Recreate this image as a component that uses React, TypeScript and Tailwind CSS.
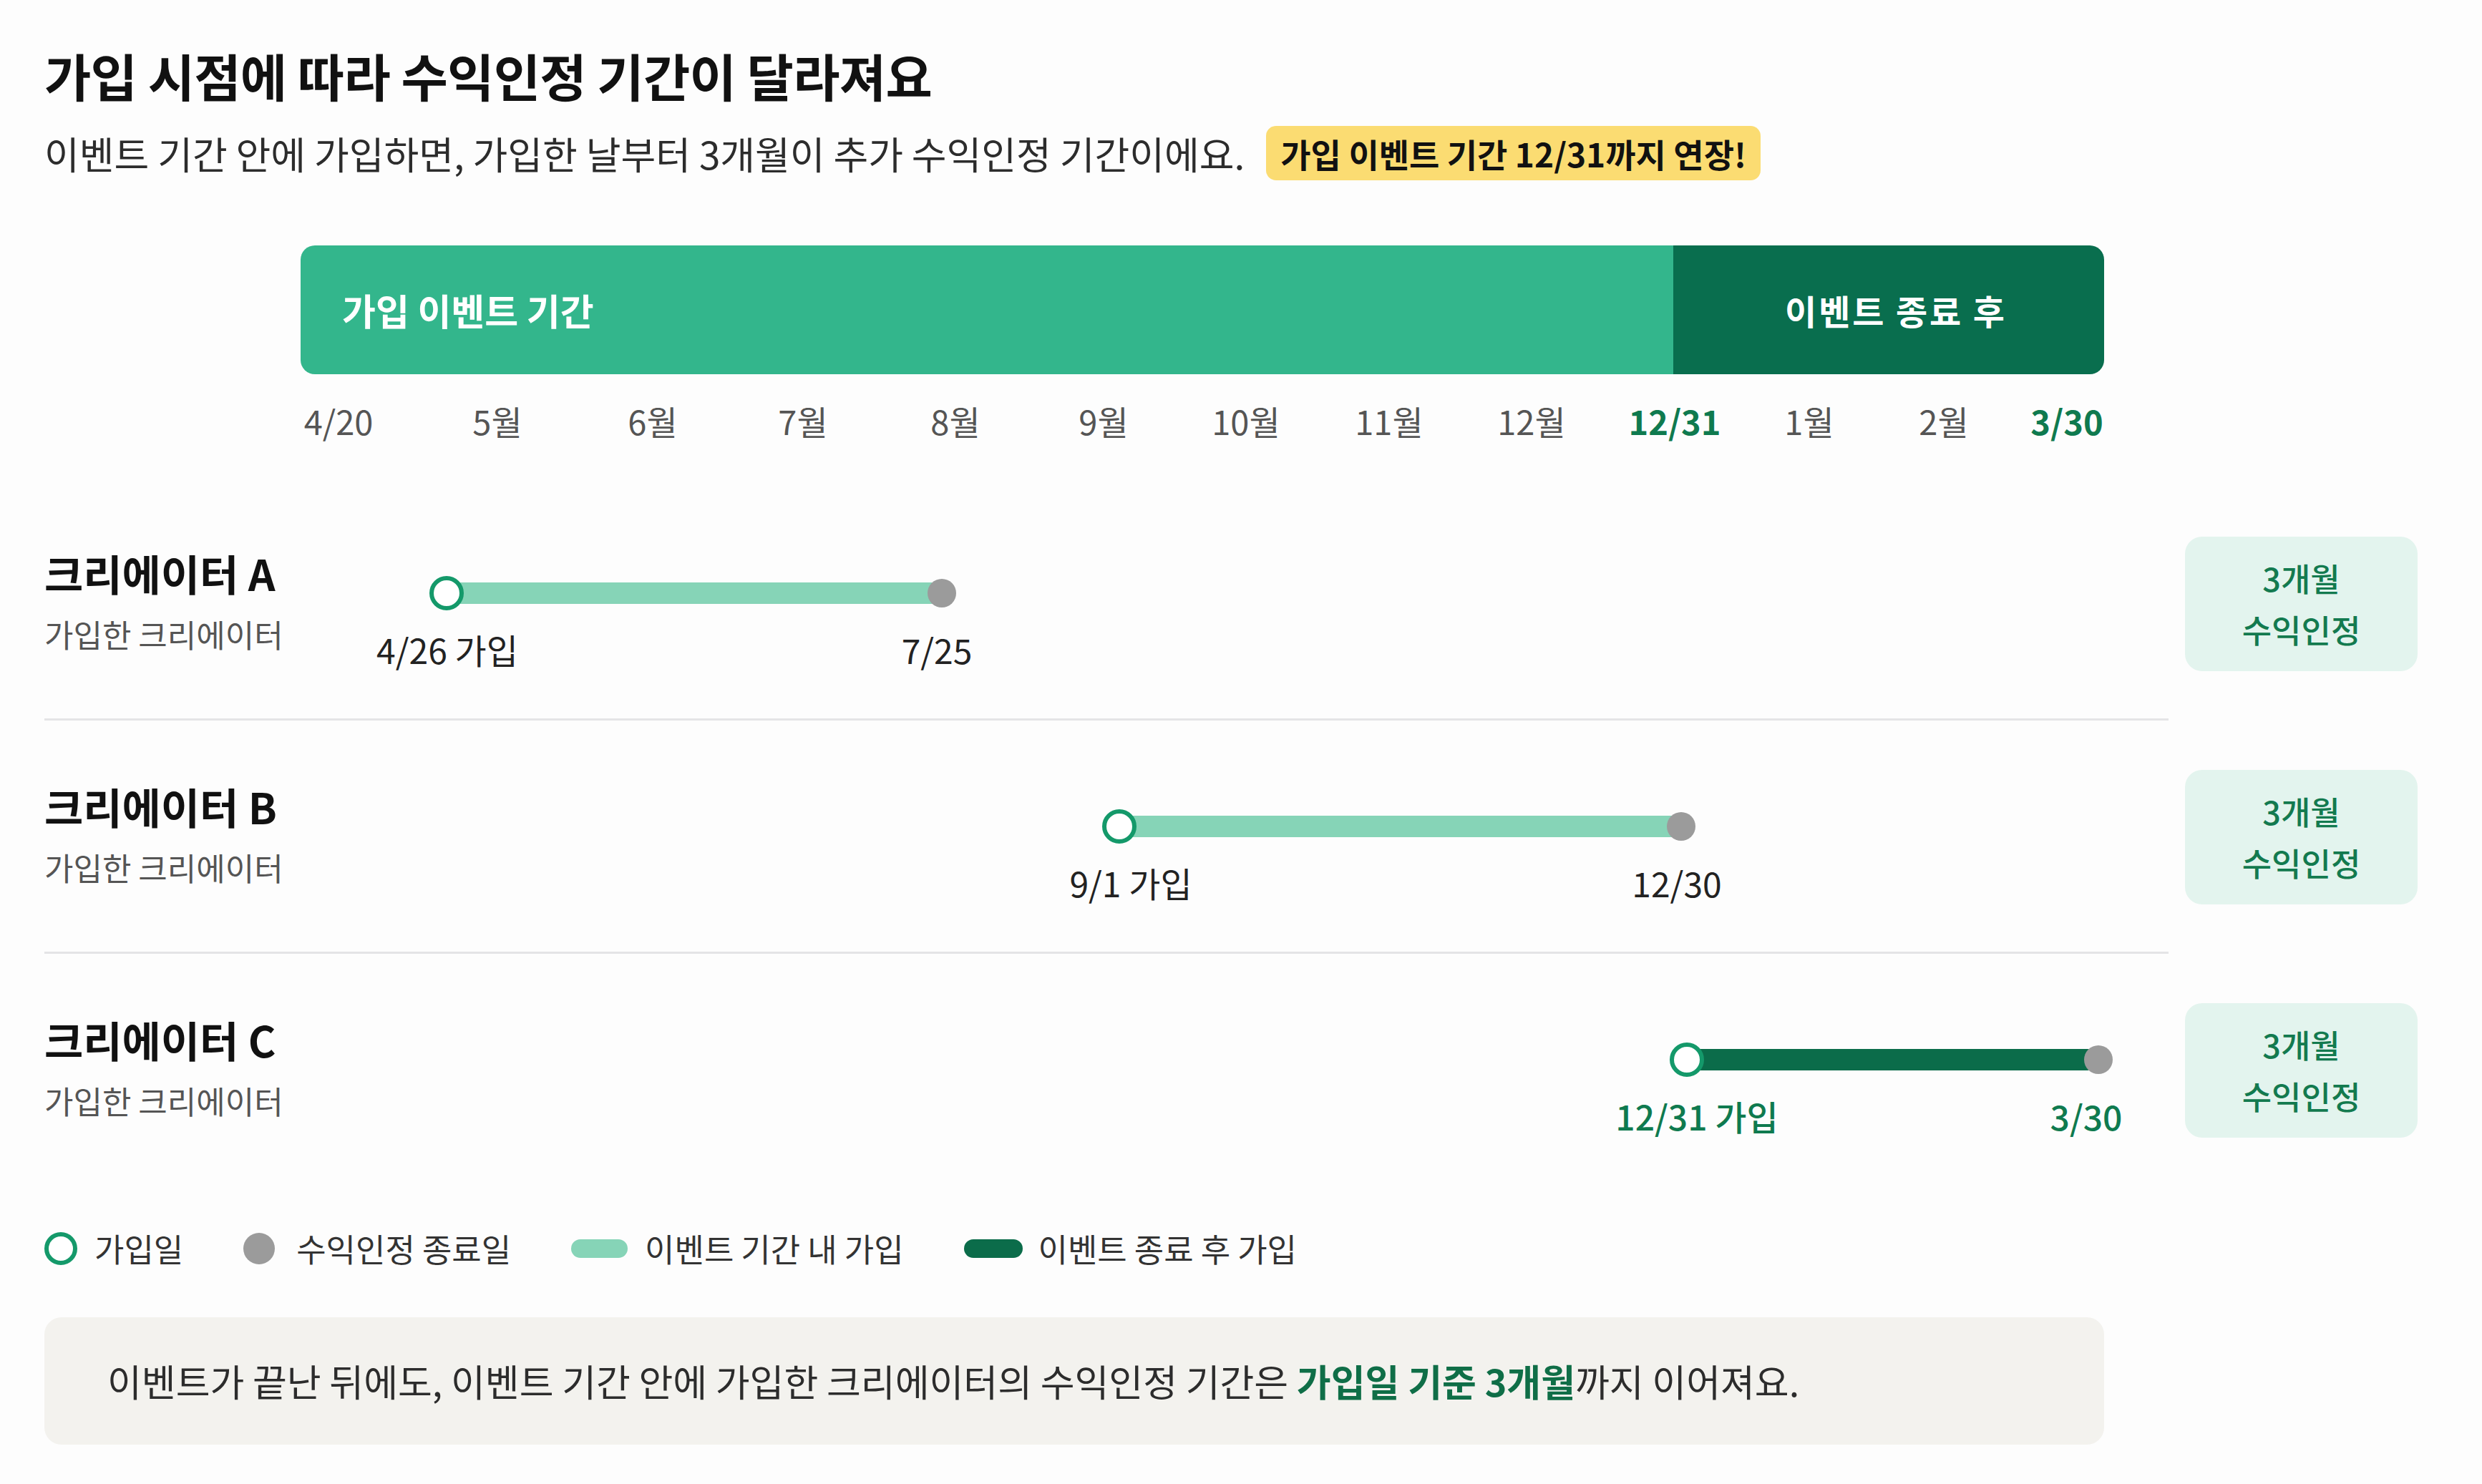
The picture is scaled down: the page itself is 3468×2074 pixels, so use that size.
import React from "react";

type Creator = {
  id: string;
  start: number;
  end: number;
  from: string;
  to: string;
  fromX: number;
  toX: number;
  after?: boolean;
};

// label centres on the axis, measured from the left edge of the period bar
const months = [
  { label: "4/20", x: 53 },
  { label: "5월", x: 275 },
  { label: "6월", x: 492 },
  { label: "7월", x: 702 },
  { label: "8월", x: 915 },
  { label: "9월", x: 1122 },
  { label: "10월", x: 1321 },
  { label: "11월", x: 1521 },
  { label: "12월", x: 1720 },
  { label: "12/31", x: 1920, strong: true },
  { label: "1월", x: 2108 },
  { label: "2월", x: 2296 },
  { label: "3/30", x: 2468, strong: true },
];

const creators: Creator[] = [
  { id: "A", start: 204, end: 896, from: "4/26 가입", to: "7/25", fromX: 205, toX: 889 },
  { id: "B", start: 1144, end: 1929, from: "9/1 가입", to: "12/30", fromX: 1160, toX: 1923 },
  { id: "C", start: 1937, end: 2512, from: "12/31 가입", to: "3/30", fromX: 1951, toX: 2495, after: true },
];

const CreatorRow: React.FC<{ row: Creator; last: boolean }> = ({ row, last }) => {
  const labelColor = row.after ? "text-[#0f7a4f] font-medium" : "text-[#222222]";

  return (
    <div className="flex items-center">
      <div
        className={
          last
            ? "flex h-[326px] w-[2968px] shrink-0"
            : "flex h-[326px] w-[2968px] shrink-0 border-b-[3px] border-[#e4e4e6]"
        }
      >
        <div className="w-[358px] shrink-0 pt-[88px]">
          <div className="text-[59px] font-bold leading-[64px] text-[#111111]">크리에이터 {row.id}</div>
          <div className="mt-[26px] text-[44px] leading-[54px] text-[#555555]">가입한 크리에이터</div>
        </div>
        <div className="relative flex-1">
          <div
            className={
              row.after
                ? "absolute top-[133px] h-[30px] rounded-full bg-[#0b6c4a]"
                : "absolute top-[133px] h-[30px] rounded-full bg-[#86d4b7]"
            }
            style={{ left: row.start, width: row.end - row.start }}
          />
          <div
            className="absolute top-[124px] h-[48px] w-[48px] -translate-x-1/2 rounded-full border-[6px] border-[#14996a] bg-white"
            style={{ left: row.start }}
          />
          <div
            className="absolute top-[128px] h-[40px] w-[40px] -translate-x-1/2 rounded-full bg-[#9b9b9b]"
            style={{ left: row.end }}
          />
          <div
            className={`absolute top-[198px] -translate-x-1/2 whitespace-nowrap text-[48px] leading-[56px] ${labelColor}`}
            style={{ left: row.fromX }}
          >
            {row.from}
          </div>
          <div
            className={`absolute top-[198px] -translate-x-1/2 whitespace-nowrap text-[48px] leading-[56px] ${labelColor}`}
            style={{ left: row.toX }}
          >
            {row.to}
          </div>
        </div>
      </div>
      <div className="ml-[23px] flex h-[188px] w-[325px] shrink-0 flex-col items-center justify-center rounded-[24px] bg-[#e3f4ee] text-[45px] font-medium leading-[72px] text-[#137a4f]">
        <span>3개월</span>
        <span>수익인정</span>
      </div>
    </div>
  );
};

const App: React.FC = () => {
  return (
    <div className="min-h-screen w-full bg-[#fdfdfd] pl-[62px] pt-[64px] font-['Noto_Sans_CJK_KR','Noto_Sans',sans-serif] text-[#222222]">
      <h1 className="text-[71px] font-bold leading-[80px] tracking-[-0.01em] text-[#111111]">
        가입 시점에 따라 수익인정 기간이 달라져요
      </h1>

      <div className="mt-[32px] flex h-[76px] items-center">
        <p className="text-[53px] leading-[67px] text-[#2c2c2c]">
          이벤트 기간 안에 가입하면, 가입한 날부터 3개월이 추가 수익인정 기간이에요.
        </p>
        <span className="ml-[30px] flex h-[76px] items-center rounded-[14px] bg-[#fbdc72] px-[20px] text-[46px] font-bold text-[#111111]">
          가입 이벤트 기간 12/31까지 연장!
        </span>
      </div>

      {/* overall period bar */}
      <div className="ml-[358px] mt-[91px] flex h-[180px] w-[2520px] overflow-hidden rounded-[20px]">
        <div className="flex w-[1918px] items-center bg-[#33b68c] pl-[58px] text-[51px] font-semibold text-white">
          가입 이벤트 기간
        </div>
        <div className="flex flex-1 items-center justify-center bg-[#096e4e] pl-[20px] text-[48px] font-semibold tracking-[0.06em] text-white">
          이벤트 종료 후
        </div>
      </div>

      <div className="relative ml-[358px] mt-[35px] h-[60px] w-[2520px]">
        {months.map((m) => (
          <span
            key={m.label}
            className={
              m.strong
                ? "absolute top-0 -translate-x-1/2 whitespace-nowrap text-[47px] font-semibold leading-[60px] text-[#0f7a4f]"
                : "absolute top-0 -translate-x-1/2 whitespace-nowrap text-[47px] leading-[60px] text-[#555555]"
            }
            style={{ left: m.x }}
          >
            {m.label}
          </span>
        ))}
      </div>

      <div className="mt-[63px]">
        {creators.map((c, i) => (
          <CreatorRow key={c.id} row={c} last={i === creators.length - 1} />
        ))}
      </div>

      {/* legend */}
      <div className="mt-[56px] flex h-[59px] items-center gap-[84px] text-[45px] text-[#333333]">
        <div className="flex items-center gap-[24px]">
          <span className="h-[46px] w-[46px] rounded-full border-[6px] border-[#14996a] bg-white" />
          <span>가입일</span>
        </div>
        <div className="flex items-center gap-[30px]">
          <span className="h-[44px] w-[44px] rounded-full bg-[#9b9b9b]" />
          <span>수익인정 종료일</span>
        </div>
        <div className="flex items-center gap-[24px]">
          <span className="h-[26px] w-[79px] rounded-full bg-[#86d4b7]" />
          <span>이벤트 기간 내 가입</span>
        </div>
        <div className="flex items-center gap-[22px]">
          <span className="h-[26px] w-[82px] rounded-full bg-[#0b6c4a]" />
          <span>이벤트 종료 후 가입</span>
        </div>
      </div>

      <div className="mt-[67px] flex h-[178px] w-[2878px] items-center rounded-[24px] bg-[#f3f2ee] pl-[88px] text-[52px] text-[#2c2c2c]">
        <p>
          이벤트가 끝난 뒤에도, 이벤트 기간 안에 가입한 크리에이터의 수익인정 기간은{" "}
          <strong className="font-bold text-[#0f6e47]">가입일 기준 3개월</strong>까지 이어져요.
        </p>
      </div>
    </div>
  );
};

export default App;
